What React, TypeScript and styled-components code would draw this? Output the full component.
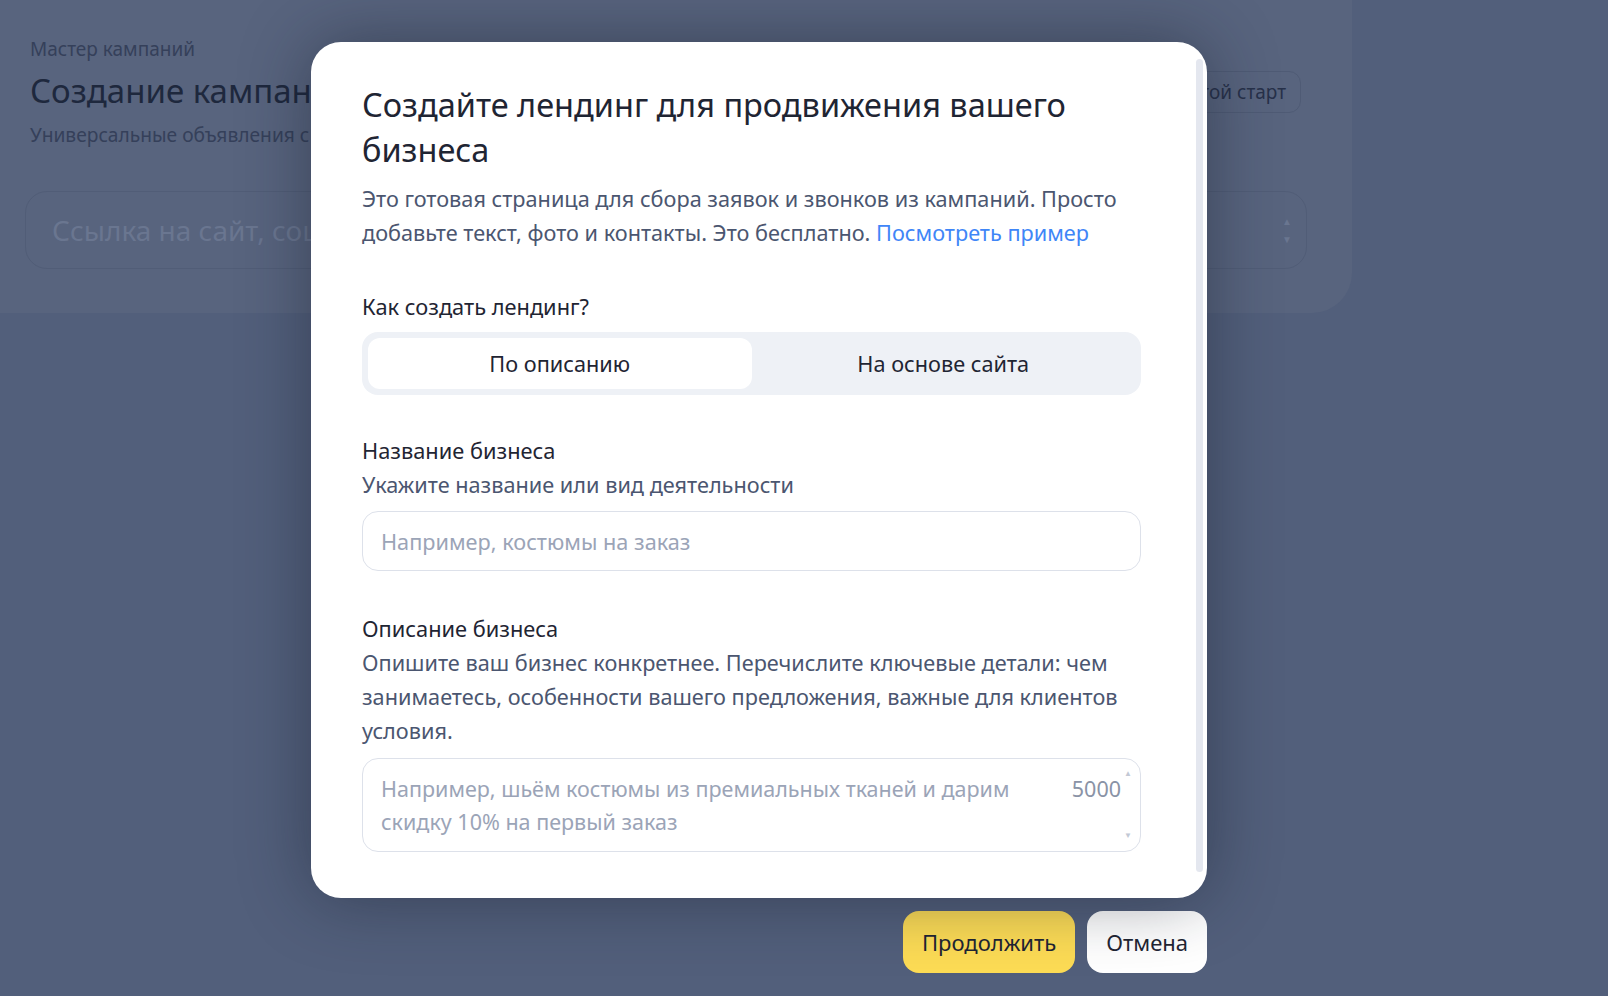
import styled, { createGlobalStyle } from "styled-components";

const GlobalStyle = createGlobalStyle`
  html, body {
    margin: 0;
    padding: 0;
    background: #525f7b;
    overflow: hidden;
  }

  body {
    font-family: "Noto Sans", "Open Sans", sans-serif;
  }

  * {
    box-sizing: border-box;
  }
`;

const Page = styled.div`
  width: 1608px;
  height: 996px;
  position: relative;
  background: #525f7b;
`;

const Card = styled.section`
  width: 1352px;
  height: 313px;
  background: #58647e;
  border-bottom-right-radius: 40px;
  padding: 36px 45px 0 25px;
  display: flex;
  flex-direction: column;
`;

const CardHead = styled.div`
  display: flex;
  justify-content: space-between;
  align-items: flex-start;
  padding-left: 5px;
`;

const Crumb = styled.div`
  font-size: 19px;
  line-height: 26px;
  color: #35405a;
`;

const PageTitle = styled.h1`
  margin: 6px 0 0;
  font-size: 33px;
  line-height: 46px;
  font-weight: 400;
  color: #1e283d;
`;

const PageSub = styled.div`
  margin-top: 8px;
  font-size: 19.2px;
  line-height: 26px;
  color: #35405a;
`;

const GhostButton = styled.div`
  margin-top: 35px;
  margin-right: 6px;
  height: 42px;
  padding: 0 14px;
  display: flex;
  align-items: center;
  border: 1px solid #4f5b75;
  border-radius: 12px;
  font-size: 19px;
  color: #27314a;
`;

const UrlField = styled.div`
  margin-top: 43px;
  height: 78px;
  border: 1px solid #515d77;
  border-radius: 22px;
  display: flex;
  align-items: center;
  justify-content: space-between;
  padding: 0 14px 0 26px;
  font-size: 28px;
  color: #6a7690;
`;

const Spin = styled.div`
  display: flex;
  flex-direction: column;
  gap: 8px;
  color: #6a7690;
  font-size: 10px;
  line-height: 10px;
`;

const Overlay = styled.div`
  position: absolute;
  inset: 0;
  display: flex;
  flex-direction: column;
  align-items: flex-start;
  padding: 42px 0 0 311px;
`;

const Modal = styled.div`
  position: relative;
  width: 896px;
  height: 856px;
  background: #ffffff;
  border-radius: 30px;
  box-shadow: 0 0 70px rgba(20, 26, 42, 0.45);
  padding: 40px 66px 0 51px;
  display: flex;
  flex-direction: column;
`;

const ScrollThumb = styled.div`
  position: absolute;
  right: 4px;
  top: 17px;
  bottom: 26px;
  width: 7px;
  border-radius: 4px;
  background: #e4e7ef;
`;

const Title = styled.h2`
  margin: 0;
  font-size: 32.5px;
  line-height: 45px;
  font-weight: 400;
  color: #1f2533;
`;

const Lead = styled.p`
  margin: 10px 0 0;
  font-size: 21.7px;
  line-height: 34px;
  color: #4b5670;

  a {
    color: #3f86f7;
    text-decoration: none;
  }
`;

const Label = styled.div<{ $gap: number }>`
  margin-top: ${(p) => p.$gap}px;
  font-size: 21.8px;
  line-height: 34px;
  color: #1f2533;
`;

const Hint = styled.div`
  font-size: 21.7px;
  line-height: 34px;
  color: #4b5670;
`;

const Segmented = styled.div`
  margin-top: 8px;
  height: 63px;
  padding: 6px;
  border-radius: 16px;
  background: #eef1f6;
  display: grid;
  grid-template-columns: 1fr 1fr;
`;

const Segment = styled.div<{ $active?: boolean }>`
  display: flex;
  align-items: center;
  justify-content: center;
  border-radius: 12px;
  font-size: 21.7px;
  color: #1f2533;
  background: ${(p) => (p.$active ? "#ffffff" : "transparent")};
`;

const TextField = styled.div`
  margin-top: 9px;
  height: 60px;
  border: 1.5px solid #dde1ea;
  border-radius: 16px;
  display: flex;
  align-items: center;
  padding: 0 18px;
  font-size: 21.7px;
  color: #9ba4b7;
`;

const AreaField = styled.div`
  position: relative;
  margin-top: 10px;
  height: 94px;
  border: 1.5px solid #dde1ea;
  border-radius: 16px;
  padding: 13px 19px 0 18px;
  display: flex;
  justify-content: space-between;
  font-size: 21.5px;
  line-height: 33px;
  color: #9ba4b7;
`;

const AreaText = styled.div`
  width: 660px;
`;

const Counter = styled.div`
  color: #8a93a6;
`;

const AreaArrow = styled.span<{ $down?: boolean }>`
  position: absolute;
  right: 8px;
  ${(p) => (p.$down ? "bottom: 12px;" : "top: 10px;")}
  font-size: 8px;
  line-height: 8px;
  color: #c3c9d5;
`;

const Actions = styled.div`
  width: 896px;
  margin-top: 13px;
  display: flex;
  justify-content: flex-end;
  gap: 12px;
`;

const Button = styled.div<{ $primary?: boolean }>`
  height: 62px;
  padding: 0 19px;
  border-radius: 16px;
  display: flex;
  align-items: center;
  font-size: 22px;
  color: #1f2533;
  background: ${(p) => (p.$primary ? "#fddc55" : "#ffffff")};
`;

export default function App() {
  return (
    <Page>
      <GlobalStyle />
      <Card>
        <CardHead>
          <div>
            <Crumb>Мастер кампаний</Crumb>
            <PageTitle>Создание кампании</PageTitle>
            <PageSub>Универсальные объявления с автоматическими настройками</PageSub>
          </div>
          <GhostButton>Простой старт</GhostButton>
        </CardHead>
        <UrlField>
          <span>Ссылка на сайт, соцсеть или маркетплейс</span>
          <Spin>
            <span>▲</span>
            <span>▼</span>
          </Spin>
        </UrlField>
      </Card>

      <Overlay>
        <Modal>
          <ScrollThumb />
          <Title>Создайте лендинг для продвижения вашего бизнеса</Title>
          <Lead>
            Это готовая страница для сбора заявок и звонков из кампаний. Просто добавьте
            текст, фото и контакты. Это бесплатно. <a href="#">Посмотреть пример</a>
          </Lead>

          <Label $gap={40}>Как создать лендинг?</Label>
          <Segmented>
            <Segment $active>По описанию</Segment>
            <Segment>На основе сайта</Segment>
          </Segmented>

          <Label $gap={39}>Название бизнеса</Label>
          <Hint>Укажите название или вид деятельности</Hint>
          <TextField>Например, костюмы на заказ</TextField>

          <Label $gap={41}>Описание бизнеса</Label>
          <Hint>
            Опишите ваш бизнес конкретнее. Перечислите ключевые детали: чем занимаетесь,
            особенности вашего предложения, важные для клиентов условия.
          </Hint>
          <AreaField>
            <AreaText>
              Например, шьём костюмы из премиальных тканей и дарим скидку 10% на первый
              заказ
            </AreaText>
            <Counter>5000</Counter>
            <AreaArrow>▲</AreaArrow>
            <AreaArrow $down>▼</AreaArrow>
          </AreaField>
        </Modal>
        <Actions>
          <Button $primary>Продолжить</Button>
          <Button>Отмена</Button>
        </Actions>
      </Overlay>
    </Page>
  );
}
